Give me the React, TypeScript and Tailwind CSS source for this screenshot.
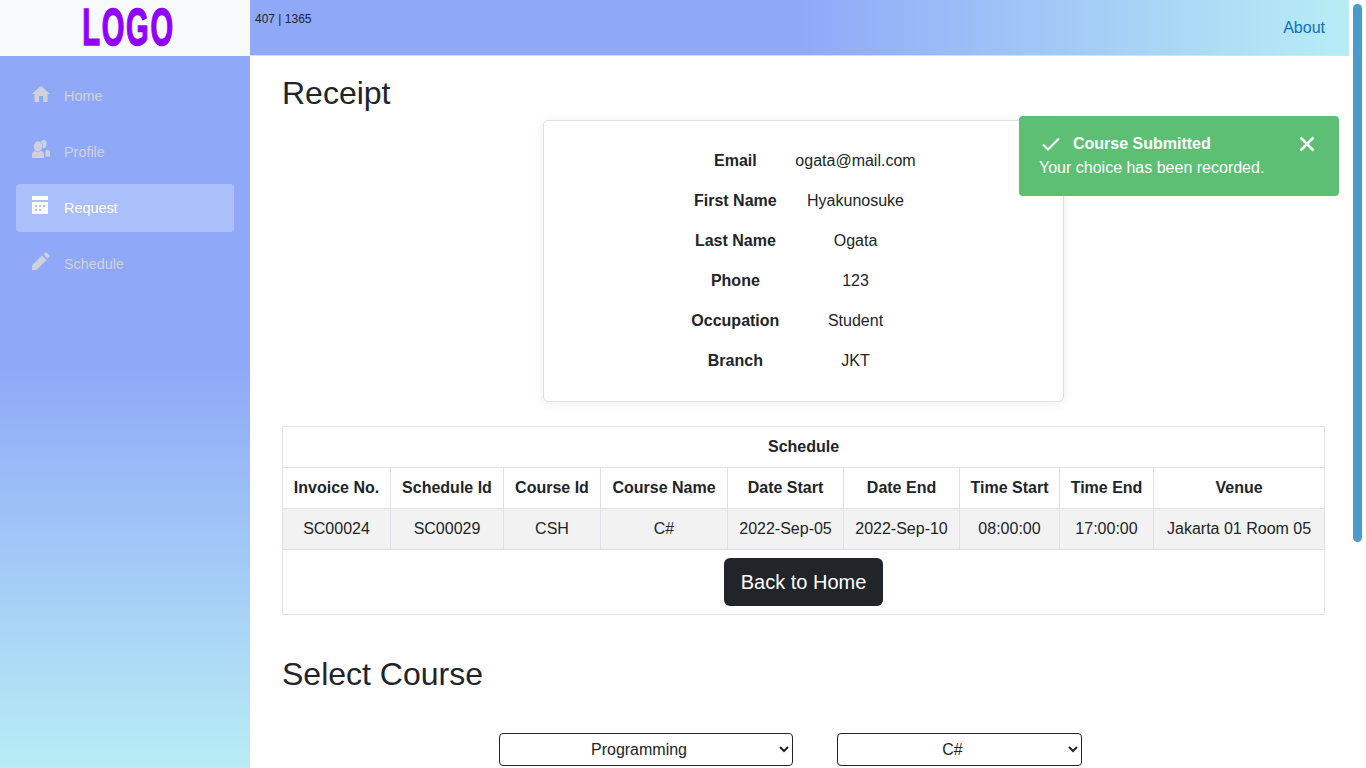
const font = { fontFamily: '"Liberation Sans", Arial, sans-serif' };

const navItems = [
  { label: "Home", icon: "home" },
  { label: "Profile", icon: "profile" },
  { label: "Request", icon: "request", active: true },
  { label: "Schedule", icon: "schedule" },
];

const details = [
  ["Email", "ogata@mail.com"],
  ["First Name", "Hyakunosuke"],
  ["Last Name", "Ogata"],
  ["Phone", "123"],
  ["Occupation", "Student"],
  ["Branch", "JKT"],
];

const columns = [
  { title: "Invoice No.", value: "SC00024", w: "w-[108px]" },
  { title: "Schedule Id", value: "SC00029", w: "w-[113px]" },
  { title: "Course Id", value: "CSH", w: "w-[97px]" },
  { title: "Course Name", value: "C#", w: "w-[127px]" },
  { title: "Date Start", value: "2022-Sep-05", w: "w-[116px]" },
  { title: "Date End", value: "2022-Sep-10", w: "w-[116px]" },
  { title: "Time Start", value: "08:00:00", w: "w-[100px]" },
  { title: "Time End", value: "17:00:00", w: "w-[94px]" },
  { title: "Venue", value: "Jakarta 01 Room 05", w: "w-[171px]" },
];

function NavIcon({ name }: { name: string }) {
  if (name === "home") {
    return (
      <svg viewBox="0 0 18 18" className="w-[18px] h-[18px]" fill="currentColor">
        <path d="M7 18v-6h4v6h4.500v-8H18L9 2 0 10h2.500v8z" />
      </svg>
    );
  }
  if (name === "profile") {
    return (
      <svg viewBox="0 0 18 18" className="w-[18px] h-[18px]" fill="currentColor">
        <ellipse cx="11.500" cy="4" rx="3" ry="4" />
        <ellipse cx="6" cy="6.500" rx="4.500" ry="5.500" stroke="#8fa9f8" strokeWidth="0.8" />
        <path d="M0 18v-4.500C0 12.500 1.500 11.500 3 11c1.500 1.500 4.500 1.500 6 0 1.500.5 3 1.500 3 2.500V18z" />
        <path d="M13.500 12l1-2.500 3.500 1.500v5.500h-4.500z" />
      </svg>
    );
  }
  if (name === "request") {
    return (
      <svg viewBox="0 0 18 18" className="w-[18px] h-[18px]" fill="currentColor">
        <path d="M0 0h16v4H0z" />
        <path
          fillRule="evenodd"
          d="M0 6h16v12H0zM3 9v2h2V9zm4 0v2h2V9zm4 0v2h2V9zM3 13v2h2v-2zm4 0v2h2v-2z"
        />
      </svg>
    );
  }
  return (
    <svg viewBox="0 0 18 18" className="w-[18px] h-[18px]" fill="currentColor">
      <path d="M0 13.500V18h4.500L14.500 8 10 3.500z" />
      <path d="M11.500 2.500L14 0l4 4-2.500 2.500z" />
    </svg>
  );
}

export default function App() {
  return (
    <div className="relative flex h-screen w-screen overflow-hidden bg-white text-[#212529]" style={font}>
      <aside className="flex w-[250px] shrink-0 flex-col">
        <div className="flex h-[56px] items-center justify-center bg-[#f8f9fa] pb-[2px] pl-[8px]">
          <span className="scale-x-[0.56] text-[52px] leading-[52px] font-bold tracking-[3px] text-[#9000ff] [-webkit-text-stroke:1.5px_#9000ff]">
            LOGO
          </span>
        </div>
        <nav className="flex flex-1 flex-col gap-2 bg-[linear-gradient(to_bottom,#8fa9f8_0%,#8fa9f8_44%,#b8edf5_100%)] px-4 pt-4">
          {navItems.map((item) => (
            <a
              key={item.label}
              className={`flex h-12 items-center gap-[14px] rounded-[4px] px-4 text-[14.4px] ${
                item.active ? "bg-[#abc0fa] text-white" : "text-[#cfd2dc]"
              }`}
            >
              <span className="-mt-[6px]">
                <NavIcon name={item.icon} />
              </span>
              <span className="pt-[2px]">{item.label}</span>
            </a>
          ))}
        </nav>
      </aside>

      <div className="flex w-[1099px] shrink-0 flex-col">
        <header className="flex h-[56px] shrink-0 justify-between border-b border-[#dcdfe6] bg-[linear-gradient(to_right,#8fa9f8_0%,#8fa9f8_50%,#b8edf5_100%)] pr-6 pl-[5px]">
          <span className="pt-[11px] text-xs leading-[16px]">407 | 1365</span>
          <a className="pt-[16px] text-base leading-6 text-[#0d6ec4]">About</a>
        </header>

        <main className="pt-[18px] pr-6 pl-8">
          <h2 className="mb-2 text-[32px] leading-[38.4px]">Receipt</h2>

          <div className="mx-auto mb-6 flex h-[282px] w-[521px] justify-center rounded-[5px] border border-[#e0e0e0] py-5 shadow-[0_2px_12px_rgba(0,0,0,0.07)]">
            <table className="h-[240px] text-center text-base">
              <tbody>
                {details.map(([label, value]) => (
                  <tr key={label}>
                    <th className="h-10 p-2 font-bold">{label}</th>
                    <td className="h-10 p-2">{value}</td>
                  </tr>
                ))}
              </tbody>
            </table>
          </div>

          <table className="w-[1042px] table-fixed border-collapse text-center text-base">
            <colgroup>
              {columns.map((col) => (
                <col key={col.title} className={col.w} />
              ))}
            </colgroup>
            <thead>
              <tr>
                <th colSpan={9} className="h-[41px] border border-[#dee2e6] p-2 font-bold">
                  Schedule
                </th>
              </tr>
              <tr>
                {columns.map((col) => (
                  <th key={col.title} className="h-[41px] border border-[#dee2e6] p-0 font-bold">
                    {col.title}
                  </th>
                ))}
              </tr>
            </thead>
            <tbody>
              <tr className="bg-[#f2f2f2]">
                {columns.map((col) => (
                  <td key={col.title} className="h-[41px] border border-[#dee2e6] p-0">
                    {col.value}
                  </td>
                ))}
              </tr>
              <tr>
                <td colSpan={9} className="h-[65px] border border-[#dee2e6] p-2">
                  <button className="h-12 w-[159px] rounded-[6px] bg-[#212529] text-xl text-white">
                    Back to Home
                  </button>
                </td>
              </tr>
            </tbody>
          </table>

          <h2 className="mt-[40px] text-[32px] leading-[38.4px]">Select Course</h2>

          <div className="mt-[39px] flex gap-[44px] pl-[217px]">
            <select className="h-[33px] w-[294px] rounded-[4px] border border-[#212529] bg-white pr-[2px] text-center text-base">
              <option>Programming</option>
            </select>
            <select className="h-[33px] w-[245px] rounded-[4px] border border-[#212529] bg-white pr-[2px] text-center text-base">
              <option>C#</option>
            </select>
          </div>
        </main>
      </div>

      {/* toast */}
      <div className="absolute top-[116px] left-[1019px] h-[80px] w-[320px] rounded-[4px] bg-[#5cbf74] pt-[16px] pl-5 text-base leading-6 text-white">
        <div className="flex items-center">
          <svg viewBox="0 0 18 14" className="mr-[13px] ml-[3px] h-[14px] w-[18px]" fill="none" stroke="currentColor" strokeWidth="2">
            <path d="M1 7.500L6 12.500 17 1.500" />
          </svg>
          <span className="font-bold">Course Submitted</span>
        </div>
        <div>Your choice has been recorded.</div>
        <svg viewBox="0 0 16 16" className="absolute top-[20px] right-[24px] h-4 w-4" fill="none" stroke="currentColor" strokeWidth="2.500">
          <path d="M1.500 1.500l13 13M14.500 1.500l-13 13" />
        </svg>
      </div>

      {/* scrollbar thumb */}
      <div className="absolute top-[4px] left-[1353px] h-[538px] w-[9px] rounded-full bg-[#4a9bc9]" />
    </div>
  );
}
